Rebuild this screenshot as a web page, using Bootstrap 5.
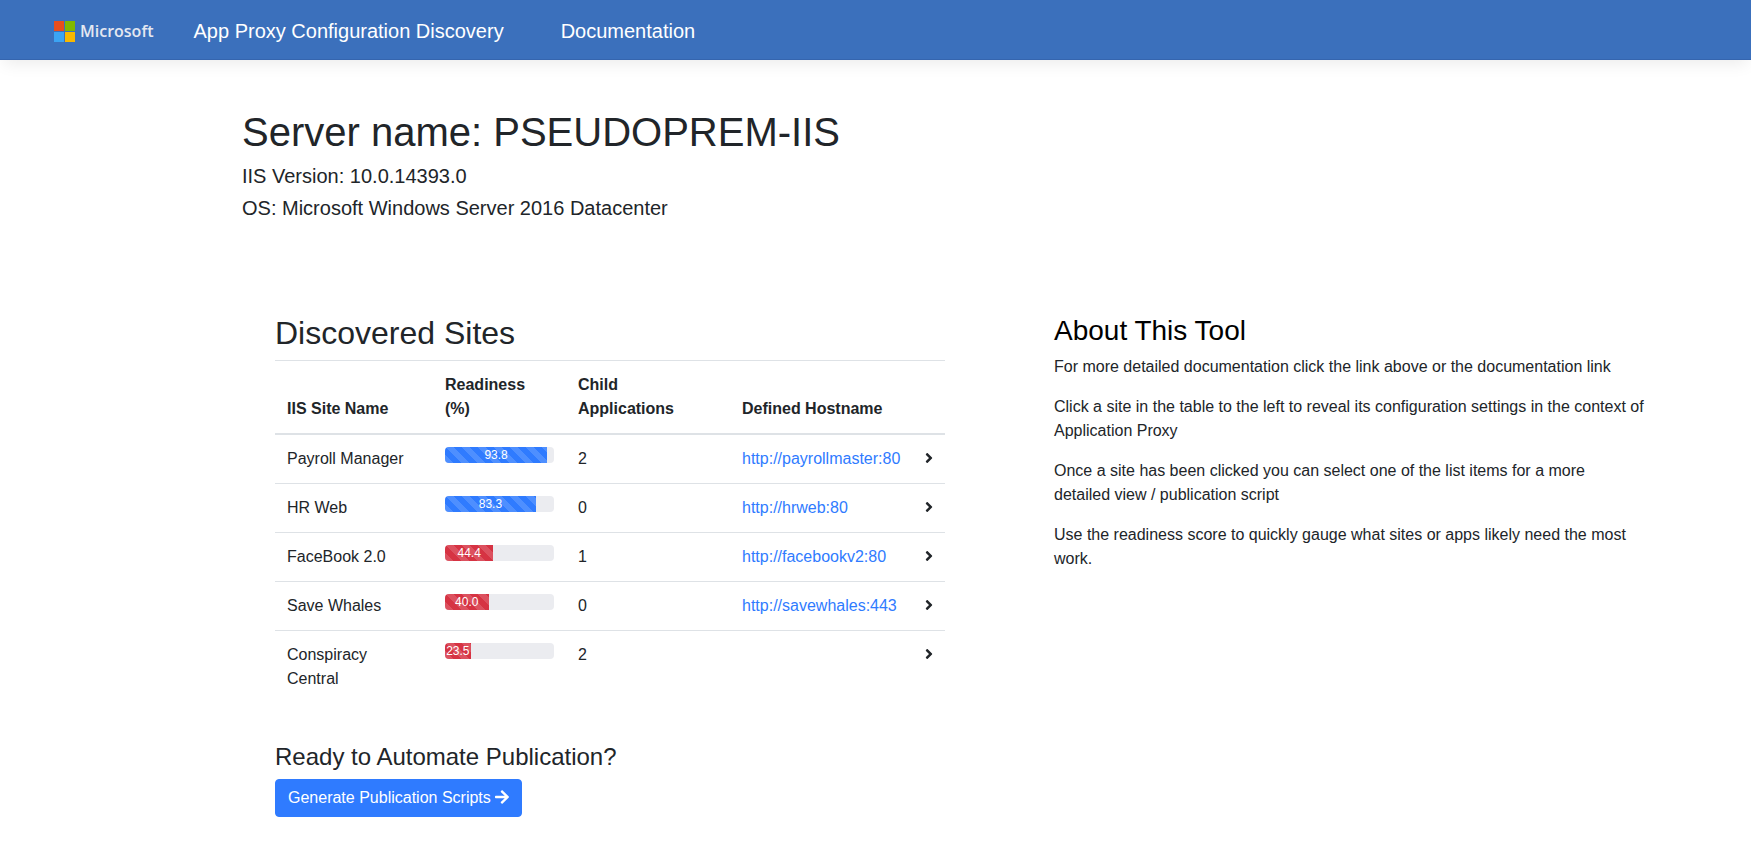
<!DOCTYPE html>
<html lang="en">
<head>
<meta charset="utf-8">
<meta name="viewport" content="width=device-width, initial-scale=1">
<title>App Proxy Configuration Discovery</title>
<link href="https://cdn.jsdelivr.net/npm/bootstrap@5.3.0/dist/css/bootstrap.min.css" rel="stylesheet">
<style>
  :root { --brand: #3b70bc; --action: #2f7bff; --ink: #212529; }
  body { font-family: "Liberation Sans", Arial, sans-serif; color: var(--ink); background: #fff; }
  .topbar { background: var(--brand); min-height: 60px; padding: 3px 54px 0; border-bottom: 1px solid #3565ae; box-shadow: 0 8px 15px -4px rgba(0, 0, 0, .08); }
  .topbar a { color: #fff; font-size: 20px; line-height: 30px; text-decoration: none; }
  .topbar .ms-logo { gap: 5px; font-family: "Open Sans", sans-serif; font-size: 16px; font-weight: 600; color: #e4e8f1; }
  .titles { margin-left: 40px; gap: 57px; }
  .page-main { padding: 48px 106px 32px 242px; }
  .server-title { font-size: 40px; line-height: 48px; margin-bottom: 8px; font-weight: 400; }
  .server-info { font-size: 20px; line-height: 24px; margin-bottom: 8px; }
  .panels { display: grid; grid-template-columns: 670fr 591fr; column-gap: 109px; padding-left: 33px; margin-top: 94px; }
  .panels h2 { font-size: 32px; line-height: 38px; font-weight: 400; }
  .panels .about-title { font-size: 28px; line-height: 33px; color: #000; }
  .panels h3 { font-size: 24px; line-height: 29px; font-weight: 400; }
  .sites { table-layout: fixed; margin-bottom: 39px; --bs-table-color: var(--ink); border-color: #dee2e6; }
  .sites > :not(caption) > * > * { padding: 12px; border-bottom: 0; border-top: 1px solid #dee2e6; }
  .sites > thead > tr > th { border-bottom: 2px solid #dee2e6; vertical-align: bottom; }
  .sites > tbody > tr:first-child > td { border-top: 0; }
  .sites a { color: var(--action); text-decoration: none; }
  .c-name { width: 158px; } .c-ready { width: 133px; } .c-apps { width: 164px; } .c-host { width: 183px; } .c-open { width: 32px; }
  .sites .row-open { padding: 0; border: 0; background: none; color: var(--ink); display: block; line-height: 24px; }
  .glyph { height: 16px; vertical-align: -2px; fill: currentColor; }
  .progress { height: 16px; border-radius: 4px; background: #ebecf0; font-size: 12px; }
  .progress .bg-action { background-color: var(--action); }
  .progress .bg-risk { background-color: #d63343; }
  .btn-action, .btn-action:hover { background: var(--action); color: #fff; border-radius: 4px; border-color: var(--action); }
  @media (max-width: 1200px) {
    .page-main { padding-left: 32px; padding-right: 32px; }
    .panels { grid-template-columns: 1fr; row-gap: 32px; padding-left: 0; }
  }
</style>
</head>
<body>
<header class="topbar navbar d-flex justify-content-start align-items-center">
  <a href="#" class="ms-logo d-flex align-items-center">
    <svg width="21" height="21" viewBox="0 0 21 21" aria-hidden="true">
      <path fill="#e94e1b" d="M0 0h10v10H0z"/><path fill="#80b900" d="M11 0h10v10H11z"/>
      <path fill="#3ba4f3" d="M0 11h10v10H0z"/><path fill="#f8b800" d="M11 11h10v10H11z"/>
    </svg>
    <span>Microsoft</span>
  </a>
  <nav class="titles d-flex align-items-center">
    <a href="#">App Proxy Configuration Discovery</a>
    <a href="#">Documentation</a>
  </nav>
</header>

<main class="page-main">
  <h1 class="server-title">Server name: PSEUDOPREM-IIS</h1>
  <p class="server-info">IIS Version: 10.0.14393.0</p>
  <p class="server-info">OS: Microsoft Windows Server 2016 Datacenter</p>

  <div class="panels">
    <section>
      <h2>Discovered Sites</h2>
      <table class="table sites">
        <colgroup><col class="c-name"><col class="c-ready"><col class="c-apps"><col class="c-host"><col class="c-open"></colgroup>
        <thead>
          <tr><th>IIS Site Name</th><th>Readiness (%)</th><th>Child<br>Applications</th><th>Defined Hostname</th><th></th></tr>
        </thead>
        <tbody>
          <tr>
            <td>Payroll Manager</td>
            <td><div class="progress"><div class="progress-bar progress-bar-striped bg-action" style="width:93.8%">93.8</div></div></td>
            <td>2</td><td><a href="#">http://payrollmaster:80</a></td>
            <td><button class="row-open" type="button" aria-label="Open Payroll Manager"><svg class="glyph" viewBox="0 0 256 512"><path d="M224.3 273l-136 136c-9.4 9.4-24.6 9.4-33.9 0l-22.6-22.6c-9.4-9.4-9.4-24.6 0-33.9l96.4-96.4-96.4-96.4c-9.4-9.4-9.4-24.6 0-33.9L54.3 103c9.4-9.4 24.6-9.4 33.9 0l136 136c9.5 9.4 9.5 24.6.1 34z"/></svg></button></td>
          </tr>
          <tr>
            <td>HR Web</td>
            <td><div class="progress"><div class="progress-bar progress-bar-striped bg-action" style="width:83.3%">83.3</div></div></td>
            <td>0</td><td><a href="#">http://hrweb:80</a></td>
            <td><button class="row-open" type="button" aria-label="Open HR Web"><svg class="glyph" viewBox="0 0 256 512"><path d="M224.3 273l-136 136c-9.4 9.4-24.6 9.4-33.9 0l-22.6-22.6c-9.4-9.4-9.4-24.6 0-33.9l96.4-96.4-96.4-96.4c-9.4-9.4-9.4-24.6 0-33.9L54.3 103c9.4-9.4 24.6-9.4 33.9 0l136 136c9.5 9.4 9.5 24.6.1 34z"/></svg></button></td>
          </tr>
          <tr>
            <td>FaceBook 2.0</td>
            <td><div class="progress"><div class="progress-bar progress-bar-striped bg-risk" style="width:44.4%">44.4</div></div></td>
            <td>1</td><td><a href="#">http://facebookv2:80</a></td>
            <td><button class="row-open" type="button" aria-label="Open FaceBook 2.0"><svg class="glyph" viewBox="0 0 256 512"><path d="M224.3 273l-136 136c-9.4 9.4-24.6 9.4-33.9 0l-22.6-22.6c-9.4-9.4-9.4-24.6 0-33.9l96.4-96.4-96.4-96.4c-9.4-9.4-9.4-24.6 0-33.9L54.3 103c9.4-9.4 24.6-9.4 33.9 0l136 136c9.5 9.4 9.5 24.6.1 34z"/></svg></button></td>
          </tr>
          <tr>
            <td>Save Whales</td>
            <td><div class="progress"><div class="progress-bar progress-bar-striped bg-risk" style="width:40%">40.0</div></div></td>
            <td>0</td><td><a href="#">http://savewhales:443</a></td>
            <td><button class="row-open" type="button" aria-label="Open Save Whales"><svg class="glyph" viewBox="0 0 256 512"><path d="M224.3 273l-136 136c-9.4 9.4-24.6 9.4-33.9 0l-22.6-22.6c-9.4-9.4-9.4-24.6 0-33.9l96.4-96.4-96.4-96.4c-9.4-9.4-9.4-24.6 0-33.9L54.3 103c9.4-9.4 24.6-9.4 33.9 0l136 136c9.5 9.4 9.5 24.6.1 34z"/></svg></button></td>
          </tr>
          <tr>
            <td>Conspiracy Central</td>
            <td><div class="progress"><div class="progress-bar progress-bar-striped bg-risk" style="width:23.5%">23.5</div></div></td>
            <td>2</td><td></td>
            <td><button class="row-open" type="button" aria-label="Open Conspiracy Central"><svg class="glyph" viewBox="0 0 256 512"><path d="M224.3 273l-136 136c-9.4 9.4-24.6 9.4-33.9 0l-22.6-22.6c-9.4-9.4-9.4-24.6 0-33.9l96.4-96.4-96.4-96.4c-9.4-9.4-9.4-24.6 0-33.9L54.3 103c9.4-9.4 24.6-9.4 33.9 0l136 136c9.5 9.4 9.5 24.6.1 34z"/></svg></button></td>
          </tr>
        </tbody>
      </table>
      <h3>Ready to Automate Publication?</h3>
      <button type="button" class="btn btn-action">Generate Publication Scripts <svg class="glyph" viewBox="0 0 448 512" aria-hidden="true"><path d="M190.5 66.9l22.2-22.2c9.4-9.4 24.6-9.4 33.9 0L441 239c9.4 9.4 9.4 24.6 0 33.9L246.6 467.3c-9.4 9.4-24.6 9.4-33.9 0l-22.2-22.2c-9.5-9.5-9.3-25 .4-34.3L311.4 296H24c-13.3 0-24-10.7-24-24v-32c0-13.3 10.7-24 24-24h287.4L190.9 101.2c-9.8-9.3-10-24.8-.4-34.3z"/></svg></button>
    </section>

    <aside>
      <h2 class="about-title">About This Tool</h2>
      <p>For more detailed documentation click the link above or the documentation link</p>
      <p>Click a site in the table to the left to reveal its configuration settings in the context of Application Proxy</p>
      <p>Once a site has been clicked you can select one of the list items for a more detailed view / publication script</p>
      <p>Use the readiness score to quickly gauge what sites or apps likely need the most work.</p>
    </aside>
  </div>
</main>
<script src="https://cdn.jsdelivr.net/npm/bootstrap@5.3.0/dist/js/bootstrap.bundle.min.js"></script>
</body>
</html>
